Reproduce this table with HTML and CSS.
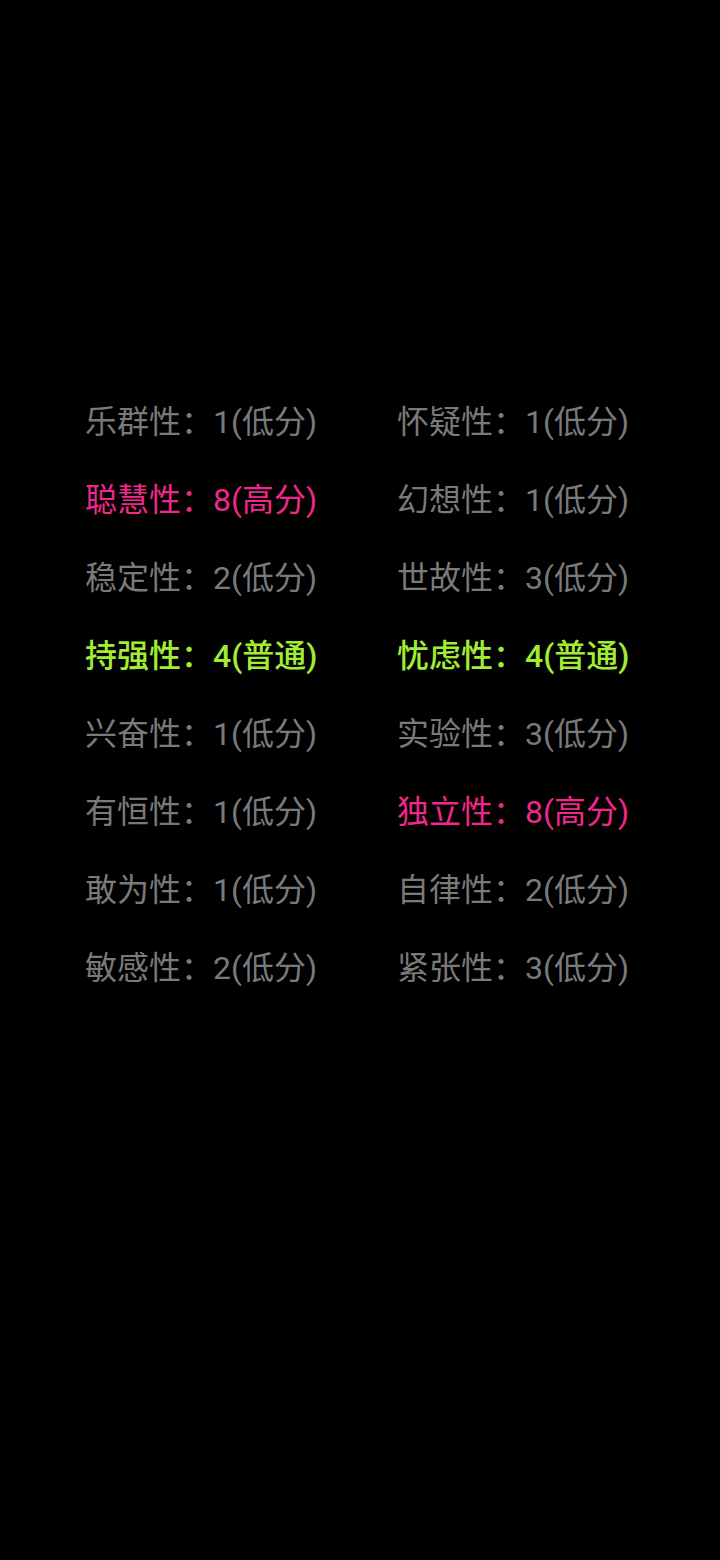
FILE: index.html
```html
<!DOCTYPE html>
<html lang="zh-CN">
<head>
<meta charset="utf-8">
<link rel="stylesheet" href="styles.css">
</head>
<body>
<main class="page">
  <div class="grid">
    <div class="item low">乐群性：1(低分)</div>
    <div class="item low">怀疑性：1(低分)</div>
    <div class="item high">聪慧性：8(高分)</div>
    <div class="item low">幻想性：1(低分)</div>
    <div class="item low">稳定性：2(低分)</div>
    <div class="item low">世故性：3(低分)</div>
    <div class="item mid">持强性：4(普通)</div>
    <div class="item mid">忧虑性：4(普通)</div>
    <div class="item low">兴奋性：1(低分)</div>
    <div class="item low">实验性：3(低分)</div>
    <div class="item low">有恒性：1(低分)</div>
    <div class="item high">独立性：8(高分)</div>
    <div class="item low">敢为性：1(低分)</div>
    <div class="item low">自律性：2(低分)</div>
    <div class="item low">敏感性：2(低分)</div>
    <div class="item low">紧张性：3(低分)</div>
  </div>
</main>
</body>
</html>
```

FILE: styles.css
```css
html, body {
  margin: 0;
  padding: 0;
  background: #000;
}
.page {
  width: 720px;
  height: 1560px;
  box-sizing: border-box;
  padding-top: 383px;
  padding-left: 85px;
}
.grid {
  display: grid;
  grid-template-columns: 312px auto;
  grid-auto-rows: 78px;
}
.item {
  font-family: Roboto, "Noto Sans CJK SC", sans-serif;
  font-size: 32px;
  line-height: 78px;
  white-space: nowrap;
}
.low { color: #7a7a7a; }
.high { color: #f0288c; }
.mid { color: #a2ec34; font-weight: 500; }
```
